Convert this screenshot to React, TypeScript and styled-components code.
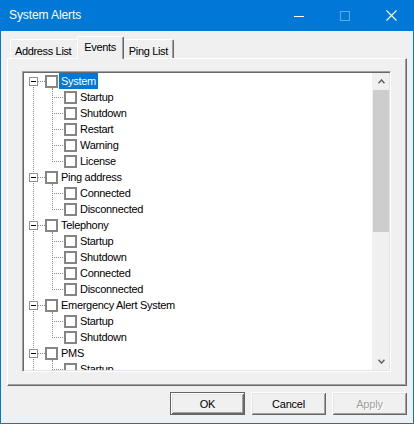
import React from 'react';
import styled, { createGlobalStyle, css } from 'styled-components';

const DOT = '#8c8c8c';

const Global = createGlobalStyle`
  html, body { margin: 0; padding: 0; background: #ffffff; }
  body { font-family: "Liberation Sans", Arial, sans-serif; }
  * { box-sizing: border-box; }
`;

const Window = styled.div`
  width: 414px;
  height: 424px;
  display: flex;
  flex-direction: column;
`;

const TitleBar = styled.div`
  height: 31px;
  flex: none;
  background: #0078d7;
  display: flex;
  align-items: center;
  color: #ffffff;
`;

const Title = styled.div`
  flex: 1;
  padding-left: 9px;
  font-size: 12px;
  line-height: 31px;
  letter-spacing: -0.1px;
`;

const CaptionButton = styled.div`
  width: 46px;
  height: 31px;
  display: flex;
  align-items: center;
  justify-content: center;
`;

const Body = styled.div`
  flex: 1;
  background: #f0f0f0;
  border: 1px solid #0078d7;
  border-top: none;
  display: flex;
  flex-direction: column;
  padding: 5px 6px 8px 6px;
`;

const TabRow = styled.div`
  height: 22px;
  flex: none;
  display: flex;
  align-items: flex-end;
  padding-left: 3px;
`;

const Tab = styled.div<{ $active?: boolean; $pl: number; $pr: number }>`
  height: 19px;
  padding: 4px ${p => p.$pr}px 0 ${p => p.$pl}px;
  font-size: 11px;
  line-height: 14px;
  letter-spacing: -0.35px;
  color: #000;
  background: #f0f0f0;
  border-top: 1px solid #ffffff;
  border-left: 1px solid #ffffff;
  border-right: 1px solid #696969;
  box-shadow: inset -1px 0 #a0a0a0;
  border-top-left-radius: 2px;
  border-top-right-radius: 2px;
  white-space: nowrap;
  ${p =>
    p.$active &&
    css`
      position: relative;
      z-index: 1;
      height: 23px;
      margin: 0 -2px -1px -2px;
      padding-top: 3px;
    `}
`;

const Panel = styled.div`
  height: 328px;
  flex: none;
  border-top: 1px solid #ffffff;
  border-left: 1px solid #ffffff;
  border-right: 1px solid #696969;
  border-bottom: 1px solid #696969;
  box-shadow: inset -1px -1px #a0a0a0;
  padding: 12px 15px 13px 14px;
  display: flex;
`;

const TreeBox = styled.div`
  width: 369px;
  height: 301px;
  background: #ffffff;
  border: 1px solid;
  border-color: #a0a0a0 #ffffff #ffffff #a0a0a0;
  box-shadow: inset 1px 1px #696969, inset -1px -1px #e3e3e3;
  padding: 1px;
  display: flex;
`;

const TreeList = styled.div`
  flex: 1;
  overflow: hidden;
  display: flex;
  flex-direction: column;
`;

const Row = styled.div`
  height: 16px;
  flex: none;
  display: flex;
  align-items: center;
`;

const dotV = (x: number, y0: number, y1: number) =>
  `repeating-linear-gradient(to bottom, ${DOT} 0 1px, transparent 1px 2px) ${x}px ${y0}px / 1px ${y1 - y0}px no-repeat`;
const dotH = (x0: number, x1: number, y: number) =>
  `repeating-linear-gradient(to right, ${DOT} 0 1px, transparent 1px 2px) ${x0}px ${y}px / ${x1 - x0}px 1px no-repeat`;

type VSpan = 'full' | 'upper' | 'lower' | 'none';

const Gutter = styled.div<{ $w: number; $lx: number; $v: VSpan; $h?: boolean }>`
  width: ${p => p.$w}px;
  height: 16px;
  flex: none;
  display: flex;
  align-items: center;
  background: ${p => {
    const layers: string[] = [];
    if (p.$v === 'full') layers.push(dotV(p.$lx, 0, 16));
    if (p.$v === 'upper') layers.push(dotV(p.$lx, 0, 9));
    if (p.$v === 'lower') layers.push(dotV(p.$lx, 12, 16));
    if (p.$h) layers.push(dotH(p.$lx + (p.$v === 'lower' || p.$w === 21 ? 5 : 0), p.$w, 8));
    return layers.length ? layers.join(', ') : 'none';
  }};
`;

const Expander = styled.div`
  width: 9px;
  height: 9px;
  margin-left: 5px;
  border: 1px solid #919191;
  background: #ffffff;
  display: flex;
  align-items: center;
  justify-content: center;
`;

const Minus = styled.div`
  width: 5px;
  height: 1px;
  background: #000000;
`;

const CheckCell = styled.div<{ $stem?: boolean }>`
  width: 13px;
  height: 16px;
  flex: none;
  display: flex;
  align-items: center;
  background: ${p => (p.$stem ? dotV(7, 15, 16) : 'none')};
`;

const Check = styled.div`
  width: 13px;
  height: 13px;
  border: 2px solid #858585;
  background: #ffffff;
`;

const Label = styled.span<{ $selected?: boolean }>`
  margin-left: 1px;
  padding: 0 2px;
  height: 16px;
  font-size: 11px;
  line-height: 16px;
  letter-spacing: -0.3px;
  white-space: nowrap;
  color: ${p => (p.$selected ? '#ffffff' : '#000000')};
  background: ${p => (p.$selected ? '#0078d7' : 'transparent')};
`;

const ScrollBar = styled.div`
  width: 17px;
  flex: none;
  background: #f0f0f0;
  display: flex;
  flex-direction: column;
`;

const ScrollArrow = styled.div`
  height: 17px;
  flex: none;
  display: flex;
  align-items: center;
  justify-content: center;
  padding-left: 1px;
`;

const Thumb = styled.div`
  height: 142px;
  flex: none;
  margin-left: 1px;
  background: #cdcdcd;
`;

const Track = styled.div`
  flex: 1;
`;

const ButtonRow = styled.div`
  flex: none;
  margin-top: 6px;
  height: 23px;
  display: flex;
  justify-content: flex-end;
  gap: 6px;
`;

const Button = styled.div<{ $default?: boolean; $disabled?: boolean }>`
  width: 75px;
  height: 23px;
  display: flex;
  align-items: center;
  justify-content: center;
  font-size: 11px;
  letter-spacing: -0.2px;
  background: #f0f0f0;
  color: ${p => (p.$disabled ? '#a0a0a0' : '#000000')};
  text-shadow: ${p => (p.$disabled ? '1px 1px #ffffff' : 'none')};
  box-shadow: ${p =>
    p.$default
      ? 'inset 0 0 0 1px #646464, inset 2px 2px #ffffff, inset -2px -2px #696969, inset 3px 3px #e3e3e3, inset -3px -3px #a0a0a0'
      : 'inset 1px 1px #ffffff, inset -1px -1px #696969, inset 2px 2px #e3e3e3, inset -2px -2px #a0a0a0'};
`;

type Group = { name: string; children: string[]; selected?: boolean };

const groups: Group[] = [
  { name: 'System', selected: true, children: ['Startup', 'Shutdown', 'Restart', 'Warning', 'License'] },
  { name: 'Ping address', children: ['Connected', 'Disconnected'] },
  { name: 'Telephony', children: ['Startup', 'Shutdown', 'Connected', 'Disconnected'] },
  { name: 'Emergency Alert System', children: ['Startup', 'Shutdown'] },
  { name: 'PMS', children: ['Startup'] },
];

const Chevron = ({ up }: { up?: boolean }) => (
  <svg width="7" height="5" viewBox="0 0 7 5">
    <polyline
      points={up ? '0.5,4.2 3.5,1 6.5,4.2' : '0.5,0.8 3.5,4 6.5,0.8'}
      fill="none"
      stroke="#606060"
      strokeWidth="1.5"
    />
  </svg>
);

export default function App() {
  return (
    <>
      <Global />
      <Window>
        <TitleBar>
          <Title>System Alerts</Title>
          <CaptionButton>
            <svg width="10" height="10" viewBox="0 0 10 10">
              <rect x="0" y="5" width="10" height="1" fill="#ffffff" />
            </svg>
          </CaptionButton>
          <CaptionButton>
            <svg width="10" height="10" viewBox="0 0 10 10">
              <rect x="0.5" y="0.5" width="9" height="9" fill="none" stroke="#5eaae6" strokeWidth="1" />
            </svg>
          </CaptionButton>
          <CaptionButton>
            <svg width="11" height="11" viewBox="0 0 11 11">
              <path d="M0.5 0.5 L10.5 10.5 M10.5 0.5 L0.5 10.5" stroke="#ffffff" strokeWidth="1.1" />
            </svg>
          </CaptionButton>
        </TitleBar>
        <Body>
          <TabRow>
            <Tab $pl={4} $pr={7}>Address List</Tab>
            <Tab $active $pl={6} $pr={7}>Events</Tab>
            <Tab $pl={6} $pr={5}>Ping List</Tab>
          </TabRow>
          <Panel>
            <TreeBox>
              <TreeList>
                {groups.map((g, gi) => (
                  <React.Fragment key={g.name}>
                    <Row>
                      <Gutter $w={21} $lx={9} $v={gi === 0 ? 'lower' : 'full'} $h>
                        <Expander>
                          <Minus />
                        </Expander>
                      </Gutter>
                      <CheckCell $stem>
                        <Check />
                      </CheckCell>
                      <Label $selected={g.selected}>{g.name}</Label>
                    </Row>
                    {g.children.map((c, ci) => (
                      <Row key={g.name + c}>
                        <Gutter $w={21} $lx={9} $v="full" />
                        <Gutter $w={19} $lx={7} $v={ci === g.children.length - 1 ? 'upper' : 'full'} $h />
                        <CheckCell>
                          <Check />
                        </CheckCell>
                        <Label>{c}</Label>
                      </Row>
                    ))}
                  </React.Fragment>
                ))}
              </TreeList>
              <ScrollBar>
                <ScrollArrow>
                  <Chevron up />
                </ScrollArrow>
                <Thumb />
                <Track />
                <ScrollArrow>
                  <Chevron />
                </ScrollArrow>
              </ScrollBar>
            </TreeBox>
          </Panel>
          <ButtonRow>
            <Button $default>OK</Button>
            <Button>Cancel</Button>
            <Button $disabled>Apply</Button>
          </ButtonRow>
        </Body>
      </Window>
    </>
  );
}
